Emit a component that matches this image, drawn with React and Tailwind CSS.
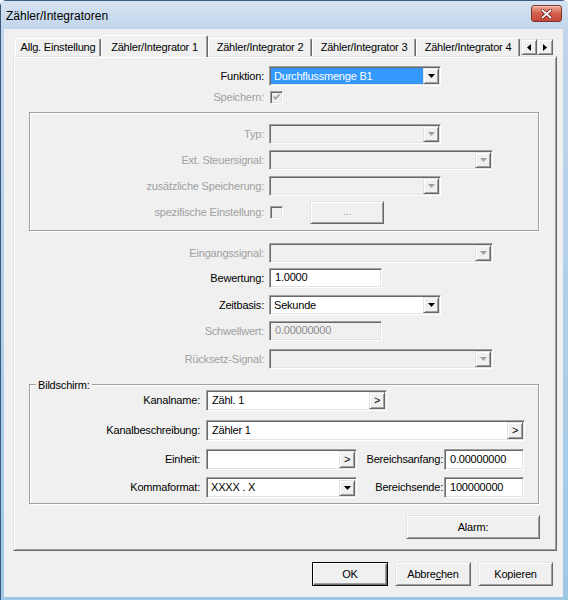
import React from "react";

const sunken =
  "border border-t-[#a0a0a0] border-l-[#a0a0a0] border-b-white border-r-white shadow-[inset_1px_1px_0_#696969,inset_-1px_-1px_0_#e3e3e3]";
const raised =
  "border border-t-[#e3e3e3] border-l-[#e3e3e3] border-b-[#696969] border-r-[#696969] shadow-[inset_1px_1px_0_#fff,inset_-1px_-1px_0_#a0a0a0]";
const etched = "border border-[#a0a0a0] shadow-[inset_1px_1px_0_#fff,1px_1px_0_#fff]";
const grayText = "text-[#a0a0a0]";

function DropBtn({ disabled }) {
  return (
    <div className={`flex h-[16px] w-[16px] flex-none items-center justify-center bg-[#f0f0f0] ${raised}`}>
      <svg width="7" height="4" viewBox="0 0 7 4">
        <path d="M0 0h7L3.5 4z" fill={disabled ? "#a0a0a0" : "#000"} />
      </svg>
    </div>
  );
}

function MoreBtn({ h = "h-[17px]" }) {
  return (
    <div className={`flex ${h} w-[16px] flex-none items-center justify-center bg-[#f0f0f0] pb-px ${raised}`}>
      &gt;
    </div>
  );
}

function Combo({ w, h = "h-[20px]", value, disabled, selected }) {
  return (
    <div className={`flex ${h} ${w} p-px ${sunken} ${disabled ? "bg-[#f0f0f0]" : "bg-white"}`}>
      <div className="flex flex-1 items-center">
        <div className={`flex h-full w-full items-center pl-[3px] ${selected ? "bg-[#3399ff] text-white" : ""}`}>
          {value}
        </div>
      </div>
      <div className="flex items-end">
        <DropBtn disabled={disabled} />
      </div>
    </div>
  );
}

function TextBox({ w, h = "h-[20px]", value, disabled, more }) {
  return (
    <div
      className={`flex ${h} ${w} items-center p-px ${sunken} ${disabled ? "bg-[#f0f0f0] text-[#8a8a8a]" : "bg-white"}`}
    >
      <div className="flex-1 pl-[4px] pb-px">{value}</div>
      {more && <MoreBtn />}
    </div>
  );
}

function Check({ checked }) {
  return (
    <div className={`h-[13px] w-[13px] flex-none bg-[#f0f0f0] ${sunken}`}>
      {checked && (
        <svg width="11" height="11" viewBox="0 0 11 11" className="block">
          <path d="M2.5 4.5l2 2.2 4-4.2" fill="none" stroke="#a0a0a0" strokeWidth="1.7" />
        </svg>
      )}
    </div>
  );
}

function Button({ w, h = "h-[24px]", children, primary }) {
  const frame = primary
    ? "border border-black shadow-[inset_1px_1px_0_#fff,inset_-1px_-1px_0_#696969,inset_-2px_-2px_0_#a0a0a0]"
    : raised;
  return (
    <div className={`flex ${w} ${h} flex-none items-center justify-center bg-[#f0f0f0] ${frame}`}>{children}</div>
  );
}

function Tab({ w, children, active }) {
  if (active) {
    return (
      <div
        className={`relative z-10 flex h-[22px] ${w} flex-none justify-center rounded-t-[2px] border-l border-t border-r border-l-white border-t-white border-r-[#696969] bg-[#f0f0f0] pt-[3px] shadow-[inset_-1px_0_0_#a0a0a0]`}
      >
        {children}
      </div>
    );
  }
  return (
    <div
      className={`mb-px flex h-[18px] ${w} flex-none items-center justify-center rounded-t-[2px] border-l border-t border-r border-l-white border-t-white border-r-[#696969] pb-px shadow-[inset_-1px_0_0_#a0a0a0]`}
    >
      {children}
    </div>
  );
}

function ArrowBtn({ dir }) {
  return (
    <div className={`flex h-[16px] w-[16px] items-center justify-center bg-[#f0f0f0] ${raised}`}>
      <svg width="4" height="7" viewBox="0 0 4 7">
        <path d={dir === "left" ? "M4 0v7L0 3.5z" : "M0 0v7L4 3.5z"} fill="#000" />
      </svg>
    </div>
  );
}

export default function App() {
  return (
    <div className="h-[600px] w-[568px] overflow-hidden bg-white font-['Liberation_Sans',Arial,sans-serif] text-[11px] tracking-[-0.2px] text-black">
      <div className="flex h-full w-full flex-col rounded-t-[6px] border-l border-t border-[#3a5a80] bg-gradient-to-b from-[#c3d6ec] to-[#9fc8e6]">
        {/* title bar */}
        <div className="flex h-[28px] flex-none items-start justify-between bg-gradient-to-b from-[#d6e4f3] to-[#c1d5eb]">
          <div className="pl-[5px] pt-[6px] text-[12px] tracking-normal">Zähler/Integratoren</div>
          <div className="mr-[6px] mt-[4px] flex h-[17px] w-[31px] items-center justify-center rounded-[3px] border border-[#7e3329] bg-gradient-to-b from-[#e9a99b] via-[#d4604c] to-[#c4483a] shadow-[inset_0_1px_0_#f5c9bf]">
            <svg width="11" height="10" viewBox="0 0 11 10">
              <path d="M1.5 1.5l8 7M9.5 1.5l-8 7" stroke="#6b1d14" strokeWidth="3.4" strokeLinecap="square" />
              <path d="M1.5 1.5l8 7M9.5 1.5l-8 7" stroke="#fff" strokeWidth="1.8" strokeLinecap="square" />
            </svg>
          </div>
        </div>

        {/* client area */}
        <div className="mb-[3px] ml-[3px] mr-[5px] flex flex-1 flex-col bg-[#f0f0f0]">
          {/* tab strip */}
          <div className="ml-[9px] flex h-[28px] w-[544px] flex-none items-end">
            <div className="flex h-full flex-1 items-end overflow-hidden pl-[2px]">
              <Tab w="w-[86px]">Allg. Einstellung</Tab>
              <Tab w="w-[107px]" active>
                Zähler/Integrator 1
              </Tab>
              <Tab w="w-[104px]">Zähler/Integrator 2</Tab>
              <Tab w="w-[104px]">Zähler/Integrator 3</Tab>
              <Tab w="w-[104px]">Zähler/Integrator 4</Tab>
            </div>
            <div className="mb-[2px] mr-[4px] flex flex-none">
              <ArrowBtn dir="left" />
              <ArrowBtn dir="right" />
            </div>
          </div>

          {/* tab panel */}
          <div className={`-mt-px ml-[9px] flex h-[495px] w-[544px] flex-none flex-col bg-[#f0f0f0] ${raised}`}>
            <div className="mt-[9px] flex items-center">
              <div className="w-[250px] text-right">Funktion:</div>
              <div className="ml-[5px]">
                <Combo w="w-[172px]" value="Durchflussmenge B1" selected />
              </div>
            </div>
            <div className="mt-[2px] flex h-[18px] items-center">
              <div className={`w-[250px] text-right ${grayText}`}>Speichern:</div>
              <div className="ml-[6px]">
                <Check checked />
              </div>
            </div>

            <div className={`ml-[15px] mt-[6px] flex w-[510px] flex-col pb-[6px] ${etched}`}>
              <div className="mt-[11px] flex items-center">
                <div className={`w-[234px] text-right ${grayText}`}>Typ:</div>
                <div className="ml-[5px]">
                  <Combo w="w-[172px]" disabled />
                </div>
              </div>
              <div className="mt-[6px] flex items-center">
                <div className={`w-[234px] text-right ${grayText}`}>Ext. Steuersignal:</div>
                <div className="ml-[5px]">
                  <Combo w="w-[224px]" disabled />
                </div>
              </div>
              <div className="mt-[6px] flex items-center">
                <div className={`w-[234px] text-right ${grayText}`}>zusätzliche Speicherung:</div>
                <div className="ml-[5px]">
                  <Combo w="w-[172px]" disabled />
                </div>
              </div>
              <div className="mt-[5px] flex h-[23px] items-center">
                <div className={`w-[234px] text-right ${grayText}`}>spezifische Einstellung:</div>
                <div className="ml-[6px] flex items-center">
                  <Check />
                  <div className="ml-[27px]">
                    <Button w="w-[74px]" h="h-[23px]">
                      <span className={`${grayText} pb-[3px]`}>...</span>
                    </Button>
                  </div>
                </div>
              </div>
            </div>

            <div className="mt-[12px] flex items-center">
              <div className={`w-[250px] text-right ${grayText}`}>Eingangssignal:</div>
              <div className="ml-[5px]">
                <Combo w="w-[224px]" disabled />
              </div>
            </div>
            <div className="mt-[5px] flex items-center">
              <div className="w-[250px] text-right">Bewertung:</div>
              <div className="ml-[5px]">
                <TextBox w="w-[113px]" value="1.0000" />
              </div>
            </div>
            <div className="mt-[7px] flex items-center">
              <div className="w-[250px] text-right">Zeitbasis:</div>
              <div className="ml-[5px]">
                <Combo w="w-[172px]" value="Sekunde" />
              </div>
            </div>
            <div className="mt-[6px] flex items-center">
              <div className={`w-[250px] text-right ${grayText}`}>Schwellwert:</div>
              <div className="ml-[5px]">
                <TextBox w="w-[113px]" value="0.00000000" disabled />
              </div>
            </div>
            <div className="mt-[8px] flex items-center">
              <div className={`w-[250px] text-right ${grayText}`}>Rücksetz-Signal:</div>
              <div className="ml-[5px]">
                <Combo w="w-[224px]" disabled />
              </div>
            </div>

            <div className={`relative ml-[15px] mt-[15px] flex w-[510px] flex-col pb-[5px] ${etched}`}>
              <span className="absolute -top-[8px] left-[6px] bg-[#f0f0f0] px-[2px]">Bildschirm:</span>
              <div className="mt-[5px] flex items-center">
                <div className="w-[170px] text-right">Kanalname:</div>
                <div className="ml-[6px]">
                  <TextBox w="w-[181px]" h="h-[21px]" value="Zähl. 1" more />
                </div>
              </div>
              <div className="mt-[9px] flex items-center">
                <div className="w-[170px] text-right">Kanalbeschreibung:</div>
                <div className="ml-[6px]">
                  <TextBox w="w-[319px]" h="h-[21px]" value="Zähler 1" more />
                </div>
              </div>
              <div className="mt-[8px] flex items-center">
                <div className="w-[170px] text-right">Einheit:</div>
                <div className="ml-[6px]">
                  <TextBox w="w-[151px]" h="h-[21px]" more />
                </div>
                <div className="w-[86px] text-right">Bereichsanfang:</div>
                <div className="ml-px">
                  <TextBox w="w-[80px]" h="h-[21px]" value="0.00000000" />
                </div>
              </div>
              <div className="mt-[7px] flex items-center">
                <div className="w-[170px] text-right">Kommaformat:</div>
                <div className="ml-[6px]">
                  <Combo w="w-[151px]" h="h-[21px]" value="XXXX . X" />
                </div>
                <div className="w-[86px] text-right">Bereichsende:</div>
                <div className="ml-px">
                  <TextBox w="w-[80px]" h="h-[21px]" value="100000000" />
                </div>
              </div>
            </div>

            <div className="mr-[16px] mt-[11px] self-end">
              <Button w="w-[134px]">Alarm:</Button>
            </div>
          </div>

          {/* dialog buttons */}
          <div className="mr-[10px] mt-[11px] flex justify-end gap-[7px]">
            <Button w="w-[76px]" primary>
              OK
            </Button>
            <Button w="w-[76px]">
              <span>
                Abbre<span className="underline">c</span>hen
              </span>
            </Button>
            <Button w="w-[75px]">Kopieren</Button>
          </div>
        </div>
      </div>
    </div>
  );
}
